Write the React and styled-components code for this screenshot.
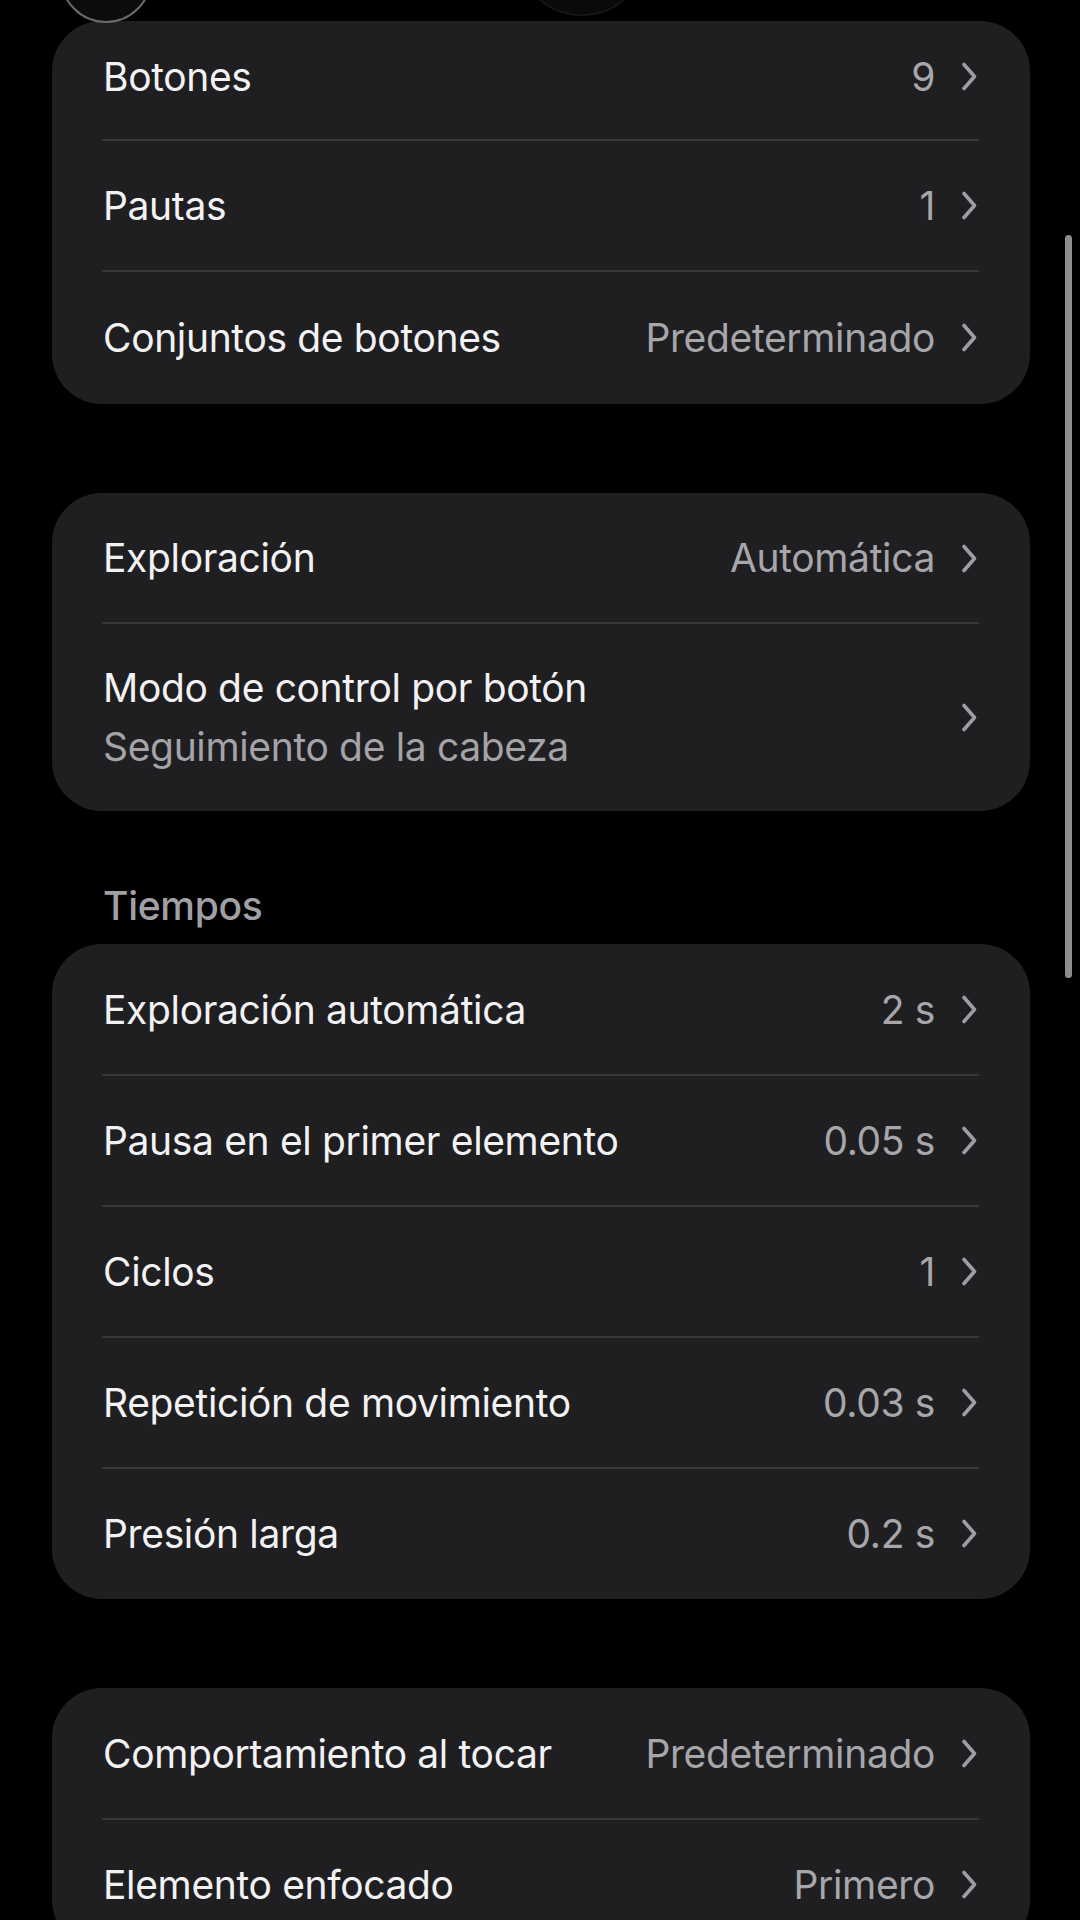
import React from 'react'
import styled, { createGlobalStyle } from 'styled-components'

const GlobalStyle = createGlobalStyle`
  html, body {
    margin: 0;
    padding: 0;
    background: #000;
  }
  body {
    font-family: Inter, "Noto Sans", "Liberation Sans", sans-serif;
    -webkit-font-smoothing: antialiased;
  }
`

const Screen = styled.div`
  position: relative;
  width: 1080px;
  height: 1920px;
  overflow: hidden;
  background: #000;
  box-sizing: border-box;
  padding: 21px 50px 0 52px;
  display: flex;
  flex-direction: column;
`

const Card = styled.div`
  background: #1f1f21;
  border-radius: 50px;
  padding: 1px 0;
  display: flex;
  flex-direction: column;
  margin-bottom: ${p => p.$gap || 89}px;
  overflow: hidden;
  flex-shrink: 0;
`

const Row = styled.div`
  height: ${p => p.$h || 129}px;
  box-sizing: border-box;
  padding: 0 53px ${p => p.$lift || 0}px 51px;
  display: flex;
  align-items: center;
  justify-content: space-between;
  flex-shrink: 0;
`

const Divider = styled.div`
  height: 2px;
  margin: 0 51px 0 50px;
  background: #38383b;
  flex-shrink: 0;
`

const Texts = styled.div`
  display: flex;
  flex-direction: column;
  gap: 9px;
`

const Title = styled.span`
  font-size: 39px;
  line-height: 50px;
  color: #f2f2f4;
  letter-spacing: -0.35px;
  white-space: nowrap;
`

const Sub = styled(Title)`
  color: #a3a3a8;
`

const Trail = styled.div`
  display: flex;
  align-items: center;
  gap: 27px;
`

const Value = styled.span`
  font-size: 39px;
  line-height: 50px;
  color: #a6a6ab;
  letter-spacing: -0.35px;
  white-space: nowrap;
`

const SectionHeader = styled.div`
  font-size: 39px;
  line-height: 48px;
  font-weight: 500;
  color: #a0a0a5;
  letter-spacing: -0.3px;
  padding-left: 51px;
  margin: -4px 0 14px;
`

const Scrollbar = styled.div`
  position: absolute;
  right: 8px;
  top: 235px;
  width: 7px;
  height: 743px;
  border-radius: 4px;
  background: #8d8d90;
`

const NavButton = styled.div`
  position: absolute;
  left: ${p => p.$x}px;
  top: ${p => p.$y}px;
  width: ${p => p.$size}px;
  height: ${p => p.$size}px;
  border-radius: 50%;
  background: ${p => p.$bg};
  border: 2px solid ${p => p.$line};
  box-sizing: border-box;
`

const Chevron = () => (
  <svg width="15" height="29" viewBox="0 0 15 29">
    <polyline
      points="2,2.5 12.5,14.5 2,26.5"
      fill="none"
      stroke="#9d9da2"
      strokeWidth="3.6"
      strokeLinecap="round"
      strokeLinejoin="round"
    />
  </svg>
)

function Item({ title, value, sub, h, lift }) {
  return (
    <Row $h={h} $lift={lift}>
      {sub ? (
        <Texts>
          <Title>{title}</Title>
          <Sub>{sub}</Sub>
        </Texts>
      ) : (
        <Title>{title}</Title>
      )}
      <Trail>
        {value && <Value>{value}</Value>}
        <Chevron />
      </Trail>
    </Row>
  )
}

function Group({ items, gap }) {
  return (
    <Card $gap={gap}>
      {items.map((it, i) => (
        <React.Fragment key={it.title}>
          {i > 0 && <Divider />}
          <Item {...it} />
        </React.Fragment>
      ))}
    </Card>
  )
}

const general = [
  { title: 'Botones', value: '9', h: 117, lift: 8 },
  { title: 'Pautas', value: '1' },
  { title: 'Conjuntos de botones', value: 'Predeterminado', h: 131 },
]

const scan = [
  { title: 'Exploración', value: 'Automática', h: 128 },
  { title: 'Modo de control por botón', sub: 'Seguimiento de la cabeza', h: 186 },
]

const timing = [
  { title: 'Exploración automática', value: '2 s' },
  { title: 'Pausa en el primer elemento', value: '0.05 s' },
  { title: 'Ciclos', value: '1' },
  { title: 'Repetición de movimiento', value: '0.03 s' },
  { title: 'Presión larga', value: '0.2 s' },
]

const touch = [
  { title: 'Comportamiento al tocar', value: 'Predeterminado' },
  { title: 'Elemento enfocado', value: 'Primero' },
]

export default function App() {
  return (
    <>
      <GlobalStyle />
      <Screen>
        <Group items={general} />
        <Group items={scan} gap={75} />
        <SectionHeader>Tiempos</SectionHeader>
        <Group items={timing} />
        <Group items={touch} />

        <NavButton $x={60} $y={-69} $size={92} $bg="#0c0c0d" $line="#6b6b6e" />
        <NavButton $x={516} $y={-116} $size={132} $bg="#0a0a0a" $line="#161617" />
        <Scrollbar />
      </Screen>
    </>
  )
}
